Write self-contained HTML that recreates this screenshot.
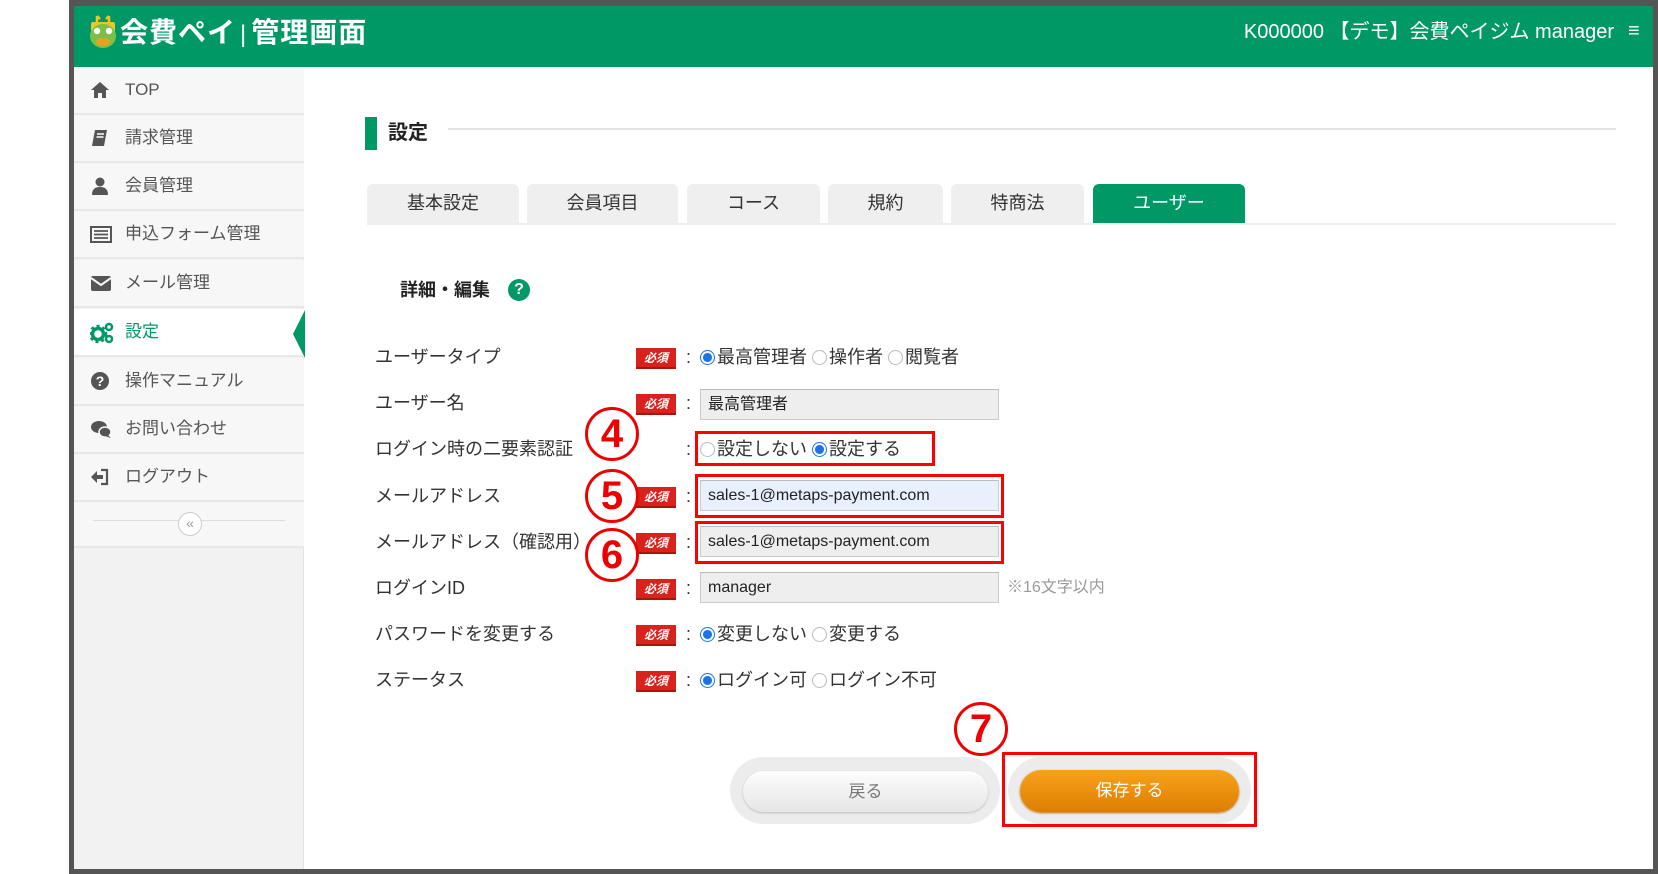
<!DOCTYPE html>
<html><head><meta charset="utf-8"><style>
*{box-sizing:border-box;margin:0;padding:0}
body{width:1658px;height:874px;position:relative;background:#fff;font-family:"Liberation Sans","Noto Sans CJK JP",sans-serif;overflow:hidden;color:#333}
.a{position:absolute}
.frame{left:69px;top:0;width:1589px;height:874px;background:#555}
.inner{left:74px;top:6px;width:1579px;height:863px;background:#fff}
.hdr{left:74px;top:6px;width:1579px;height:61px;background:#009966}
.side{left:74px;top:67px;width:230px;height:802px;background:#f2f2f2;border-right:1px solid #e2e2e2}
.it{position:absolute;left:74px;width:230px;height:48px;background:#f7f7f7;border-bottom:2px solid #e8e8e8;font-size:17px;color:#555;line-height:46px;padding-left:51px}
.it svg{position:absolute;left:16px;top:13px}
.tab{position:absolute;top:184px;height:40px;background:#efefef;border-radius:6px 6px 0 0;font-size:18px;text-align:center;line-height:38px;color:#333}
.lbl{position:absolute;left:375px;font-size:18px;color:#333;line-height:24px}
.bd{position:absolute;left:636px;width:40px;height:21px;background:#d9221c;color:#fff;font-size:12px;font-weight:bold;font-style:italic;text-align:center;line-height:21px;border-bottom:2px solid #a81510}
.col{position:absolute;left:686px;font-size:18px;line-height:24px}
.inp{position:absolute;left:700px;width:299px;height:31px;background:#eee;border:1px solid #ccc;border-top-color:#bbb;font-size:16px;line-height:29px;padding-left:7px;color:#222}
.rad{position:absolute;font-size:18px;line-height:24px;color:#333}
.r{display:inline-block;width:15px;height:15px;border-radius:50%;border:1px solid #bbb;background:#fff;vertical-align:-2px;margin-right:2px}
.r.on{border:1px solid #1a73e8;background:radial-gradient(circle,#1a73e8 0 4.2px,#fff 4.8px)}
.box{position:absolute;border:3px solid #f00}
.circ{position:absolute;width:54px;height:54px;border:3px solid #e00;border-radius:50%;background:#fff;color:#e00;font-weight:bold;font-size:40px;text-align:center;line-height:48px;font-family:"Liberation Sans",sans-serif}
</style></head><body>
<div class="a frame"></div><div class="a inner"></div>
<div class="a hdr"></div>
<svg class="a" style="left:88px;top:15px" width="30" height="34" viewBox="0 0 30 34"><path d="M9 1v6M21 1v6M9 1l3 3M21 1l-3 3" stroke="#e8c72a" stroke-width="2.5" fill="none"/><rect x="3" y="7" width="24" height="10" rx="2" fill="#e8c72a"/><ellipse cx="15" cy="21" rx="13" ry="12" fill="#7cc04a"/><circle cx="9" cy="16" r="3.2" fill="#fff"/><circle cx="21" cy="16" r="3.2" fill="#fff"/><ellipse cx="15" cy="27" rx="7" ry="4" fill="#e8a020"/></svg>
<div class="a" style="left:120px;top:14px;color:#fff;font-size:28px;font-weight:bold;line-height:38px;letter-spacing:1px">会費ペイ<span style="font-weight:normal;font-size:24px;margin:0 4px">|</span>管理画面</div>
<div class="a" style="right:44px;top:18px;color:#fff;font-size:20px;line-height:28px">K000000 【デモ】会費ペイジム manager</div>
<div class="a" style="left:1628px;top:17px;color:#fff;font-size:20px;line-height:28px">≡</div>

<div class="a side"></div>
<div class="it" style="top:67px"><svg width="20" height="20" viewBox="0 0 20 20"><path d="M10 2L1 10h3v8h4v-5h4v5h4v-8h3z" fill="#555"/></svg>TOP</div>
<div class="it" style="top:115px"><svg width="20" height="20" viewBox="0 0 20 20"><path d="M5 2h12l-3 16H2z" fill="#555"/><path d="M7 6h7M6.5 9h7" stroke="#fff" stroke-width="1.5"/></svg>請求管理</div>
<div class="it" style="top:163px"><svg width="20" height="20" viewBox="0 0 20 20"><circle cx="10" cy="6" r="4.5" fill="#555"/><path d="M2 19c0-6 3-8 8-8s8 2 8 8z" fill="#555"/></svg>会員管理</div>
<div class="it" style="top:211px"><svg width="22" height="20" viewBox="0 0 22 20"><rect x="1" y="3" width="20" height="15" fill="none" stroke="#555" stroke-width="2"/><path d="M4 7h14M4 10.5h14M4 14h14" stroke="#555" stroke-width="1.8"/></svg>申込フォーム管理</div>
<div class="it" style="top:260px"><svg width="22" height="20" viewBox="0 0 22 20"><rect x="1" y="3" width="20" height="15" rx="2" fill="#555"/><path d="M1 5l10 7 10-7" stroke="#f7f7f7" stroke-width="2" fill="none"/></svg>メール管理</div>
<div class="it" style="top:309px;background:#fff;color:#009966"><svg width="24" height="22" viewBox="0 0 24 22"><circle cx="8" cy="12" r="5.5" fill="none" stroke="#009966" stroke-width="3.5"/><circle cx="8" cy="12" r="8" fill="none" stroke="#009966" stroke-width="2.5" stroke-dasharray="3 3"/><circle cx="19" cy="5" r="3" fill="none" stroke="#009966" stroke-width="2.5"/><circle cx="19" cy="17" r="3" fill="none" stroke="#009966" stroke-width="2.5"/></svg>設定</div>
<svg class="a" style="left:291px;top:310px" width="14" height="48"><path d="M14 0L2 24 14 48z" fill="#009966"/></svg>
<div class="it" style="top:358px"><svg width="20" height="20" viewBox="0 0 20 20"><circle cx="10" cy="10" r="9" fill="#555"/><text x="10" y="15" font-size="14" font-weight="bold" text-anchor="middle" fill="#fff" font-family="Liberation Sans">?</text></svg>操作マニュアル</div>
<div class="it" style="top:406px"><svg width="22" height="20" viewBox="0 0 22 20"><ellipse cx="9" cy="8" rx="8" ry="6" fill="#555"/><ellipse cx="15" cy="13" rx="6" ry="5" fill="#555" stroke="#f7f7f7" stroke-width="1.5"/><path d="M18 16l3 3-6-2z" fill="#555"/></svg>お問い合わせ</div>
<div class="it" style="top:454px"><svg width="20" height="20" viewBox="0 0 20 20"><path d="M11 3h6v14h-6" fill="none" stroke="#555" stroke-width="2.2"/><path d="M1 10l6-6v4h6v4H7v4z" fill="#555"/></svg>ログアウト</div>
<div class="it" style="top:502px;height:46px"></div>
<div class="a" style="left:93px;top:520px;width:192px;height:1px;background:#ddd"></div>
<div class="a" style="left:178px;top:512px;width:24px;height:24px;border-radius:50%;border:1px solid #ccc;background:#fff;color:#999;font-size:14px;text-align:center;line-height:21px">«</div>

<div class="a" style="left:365px;top:117px;width:12px;height:33px;background:#009966"></div>
<div class="a" style="left:388px;top:119px;font-size:20px;font-weight:bold;line-height:28px;color:#222">設定</div>
<div class="a" style="left:448px;top:128px;width:1168px;height:2px;background:#e4e4e4"></div>

<div class="tab" style="left:367px;width:152px">基本設定</div>
<div class="tab" style="left:527px;width:151px">会員項目</div>
<div class="tab" style="left:687px;width:133px">コース</div>
<div class="tab" style="left:828px;width:115px">規約</div>
<div class="tab" style="left:951px;width:133px">特商法</div>
<div class="tab" style="left:1093px;width:152px;background:#009966;color:#fff">ユーザー</div>
<div class="a" style="left:367px;top:223px;width:1249px;height:2px;background:#eee"></div>

<div class="a" style="left:400px;top:277px;font-size:18px;font-weight:bold;line-height:26px;color:#222">詳細・編集</div>
<div class="a" style="left:508px;top:279px;width:22px;height:22px;border-radius:50%;background:#009966;color:#fff;font-weight:bold;font-size:16px;text-align:center;line-height:22px">?</div>

<div class="lbl" style="top:345px">ユーザータイプ</div>
<div class="bd" style="top:348px">必須</div><div class="col" style="top:345px">:</div>
<div class="rad" style="left:700px;top:345px"><span class="r on"></span>最高管理者 <span class="r"></span>操作者 <span class="r"></span>閲覧者</div>

<div class="lbl" style="top:391px">ユーザー名</div>
<div class="bd" style="top:394px">必須</div><div class="col" style="top:391px">:</div>
<div class="inp" style="top:389px">最高管理者</div>

<div class="lbl" style="top:437px">ログイン時の二要素認証</div>
<div class="col" style="top:437px">:</div>
<div class="rad" style="left:700px;top:437px"><span class="r"></span>設定しない <span class="r on"></span>設定する</div>

<div class="lbl" style="top:484px">メールアドレス</div>
<div class="bd" style="top:487px">必須</div><div class="col" style="top:484px">:</div>
<div class="inp" style="top:480px;background:#e8f0fe">sales-1@metaps-payment.com</div>

<div class="lbl" style="top:530px">メールアドレス（確認用）</div>
<div class="bd" style="top:533px">必須</div><div class="col" style="top:530px">:</div>
<div class="inp" style="top:526px">sales-1@metaps-payment.com</div>

<div class="lbl" style="top:576px">ログインID</div>
<div class="bd" style="top:579px">必須</div><div class="col" style="top:576px">:</div>
<div class="inp" style="top:572px">manager</div>
<div class="a" style="left:1007px;top:576px;font-size:16px;color:#999;line-height:24px">※16文字以内</div>

<div class="lbl" style="top:622px">パスワードを変更する</div>
<div class="bd" style="top:625px">必須</div><div class="col" style="top:622px">:</div>
<div class="rad" style="left:700px;top:622px"><span class="r on"></span>変更しない <span class="r"></span>変更する</div>

<div class="lbl" style="top:668px">ステータス</div>
<div class="bd" style="top:671px">必須</div><div class="col" style="top:668px">:</div>
<div class="rad" style="left:700px;top:668px"><span class="r on"></span>ログイン可 <span class="r"></span>ログイン不可</div>

<div class="a" style="left:730px;top:757px;width:270px;height:67px;border-radius:34px;background:#ececec"></div>
<div class="a" style="left:743px;top:771px;width:245px;height:41px;border-radius:21px;background:linear-gradient(#fdfdfd,#e6e6e6);box-shadow:0 1px 2px #bbb;color:#777;font-size:17px;text-align:center;line-height:41px">戻る</div>
<div class="a" style="left:1008px;top:757px;width:243px;height:67px;border-radius:34px;background:#ececec"></div>
<div class="a" style="left:1020px;top:770px;width:219px;height:42px;border-radius:21px;background:linear-gradient(#f8a21c,#de7d02);box-shadow:0 1px 2px #b76a00;color:#fff;font-size:17px;text-align:center;line-height:42px">保存する</div>

<div class="box" style="left:695px;top:431px;width:240px;height:35px"></div>
<div class="box" style="left:695px;top:474px;width:309px;height:44px"></div>
<div class="box" style="left:695px;top:521px;width:309px;height:43px"></div>
<div class="box" style="left:1002px;top:752px;width:255px;height:75px"></div>
<div class="circ" style="left:585px;top:407px">4</div>
<div class="circ" style="left:585px;top:469px">5</div>
<div class="circ" style="left:585px;top:528px">6</div>
<div class="circ" style="left:954px;top:702px">7</div>
</body></html>
